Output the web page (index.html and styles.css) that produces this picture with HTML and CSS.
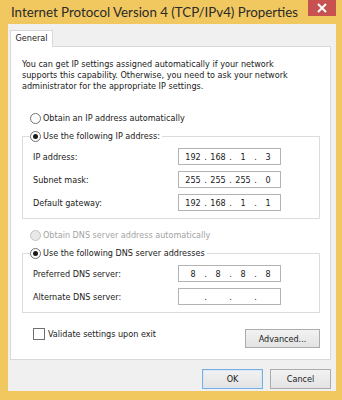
FILE: index.html
```html
<!DOCTYPE html>
<html lang="en">
<head>
  <meta charset="UTF-8">
  <title>Internet Protocol Version 4 (TCP/IPv4) Properties</title>
  <link rel="stylesheet" href="styles.css">
</head>
<body>
  <div class="window">
    <!-- Заголовок окна -->
    <div class="titlebar">
      <span class="title">Internet Protocol Version 4 (TCP/IPv4) Properties</span>
      <span class="close">
        <svg width="28" height="16" viewBox="0 0 28 16"><path d="M10 4 L18 12 M18 4 L10 12" stroke="#fff" stroke-width="2" fill="none"/></svg>
      </span>
    </div>

    <div class="client">
      <div class="tabs"><div class="tab">General</div></div>

      <div class="panel">
        <p class="intro">You can get IP settings assigned automatically if your network<br>supports this capability. Otherwise, you need to ask your network<br>administrator for the appropriate IP settings.</p>

        <div class="option first"><span class="radio"></span>Obtain an IP address automatically</div>

        <fieldset class="group">
          <legend class="option"><span class="radio checked"></span>Use the following IP address:</legend>
          <div class="field">
            <span class="label">IP address:</span>
            <span class="ip"><span class="oct">192</span><span class="dot">.</span><span class="oct">168</span><span class="dot">.</span><span class="oct">1</span><span class="dot">.</span><span class="oct">3</span></span>
          </div>
          <div class="field">
            <span class="label">Subnet mask:</span>
            <span class="ip"><span class="oct">255</span><span class="dot">.</span><span class="oct">255</span><span class="dot">.</span><span class="oct">255</span><span class="dot">.</span><span class="oct">0</span></span>
          </div>
          <div class="field">
            <span class="label">Default gateway:</span>
            <span class="ip"><span class="oct">192</span><span class="dot">.</span><span class="oct">168</span><span class="dot">.</span><span class="oct">1</span><span class="dot">.</span><span class="oct">1</span></span>
          </div>
        </fieldset>

        <div class="option disabled after-group"><span class="radio"></span>Obtain DNS server address automatically</div>

        <fieldset class="group">
          <legend class="option"><span class="radio checked"></span>Use the following DNS server addresses</legend>
          <div class="field">
            <span class="label">Preferred DNS server:</span>
            <span class="ip"><span class="oct">8</span><span class="dot">.</span><span class="oct">8</span><span class="dot">.</span><span class="oct">8</span><span class="dot">.</span><span class="oct">8</span></span>
          </div>
          <div class="field">
            <span class="label">Alternate DNS server:</span>
            <span class="ip"><span class="oct"></span><span class="dot">.</span><span class="oct"></span><span class="dot">.</span><span class="oct"></span><span class="dot">.</span><span class="oct"></span></span>
          </div>
        </fieldset>

        <div class="bottom-row">
          <label class="check"><span class="box"></span>Validate settings upon exit</label>
          <button class="btn advanced">Advanced...</button>
        </div>
      </div>

      <!-- Кнопки диалога -->
      <div class="actions">
        <button class="btn default">OK</button>
        <button class="btn">Cancel</button>
      </div>
    </div>
  </div>
</body>
</html>
```

FILE: styles.css
```css
* {
  box-sizing: border-box;
}

body {
  margin: 0;
  background: #f1c760;
  font-family: "DejaVu Sans Condensed", "DejaVu Sans", sans-serif;
  font-size: 9px;
  color: #1a1a1a;
}

/* Рамка окна */
.window {
  width: 342px;
  height: 400px;
  background: #f1c760;
  padding: 0 6px 9px 8px;
  display: flex;
  flex-direction: column;
}

.titlebar {
  height: 24px;
  display: flex;
  justify-content: space-between;
  align-items: flex-start;
}

.title {
  font-family: Lato, "Noto Sans", sans-serif;
  font-size: 13.3px;
  line-height: 20px;
  white-space: nowrap;
  color: #2b2b2b;
  padding: 2px 0 0 3px;
  min-width: 0;
}

.close {
  width: 28px;
  height: 16px;
  background: #c75050;
  display: flex;
  flex-shrink: 0;
}

/* Клиентская область */
.client {
  flex: 1;
  background: #f0f0f0;
  padding: 6px 5px 0 2px;
}

.tabs {
  display: flex;
  height: 16px;
}

.tab {
  position: relative;
  width: 43px;
  height: 17px;
  background: #fff;
  border: 1px solid #d9d9d9;
  border-bottom: none;
  text-align: center;
  line-height: 15px;
}

.panel {
  height: 314px;
  background: #fff;
  border: 1px solid #d9d9d9;
  padding: 12px 10px 0 11px;
}

.intro {
  margin: 0;
  line-height: 11px;
}

/* Радиокнопки */
.option {
  display: flex;
  align-items: center;
  height: 14px;
  line-height: 14px;
  padding-left: 8px;
}

.option.first {
  margin-top: 19px;
}

.option.after-group {
  margin-top: 9px;
}

.option.disabled {
  color: #a3a3a3;
}

.radio {
  width: 11px;
  height: 11px;
  border: 1px solid #707070;
  border-radius: 50%;
  background: #fff;
  margin-right: 2px;
  display: flex;
  align-items: center;
  justify-content: center;
}

.radio.checked::after {
  content: "";
  width: 5px;
  height: 5px;
  border-radius: 50%;
  background: #1a1a1a;
}

.disabled .radio {
  border-color: #c4c4c4;
  background: #e8e8e8;
}

/* Группы полей */
.group {
  margin: 4px 0 0;
  padding: 5px 0 7px 10px;
  border: 1px solid #dcdcdc;
  min-width: 0;
}

.group legend {
  padding: 0 2px 0 0;
  margin-left: -3px;
}

.field {
  display: flex;
  align-items: center;
  height: 17px;
  margin-bottom: 6px;
}

.field:last-child {
  margin-bottom: 0;
}

.label {
  width: 145px;
}

.ip {
  display: flex;
  align-items: center;
  width: 103px;
  height: 17px;
  border: 1px solid #b3b3b3;
  background: #fff;
  padding-left: 5px;
}

.oct {
  width: 18px;
  text-align: center;
}

.dot {
  width: 7px;
  text-align: center;
}

/* Нижняя строка панели */
.bottom-row {
  display: flex;
  justify-content: space-between;
  align-items: flex-start;
  margin-top: 15px;
}

.check {
  display: flex;
  align-items: center;
  height: 12px;
  padding-left: 11px;
}

.box {
  width: 12px;
  height: 12px;
  border: 1px solid #707070;
  background: #fff;
  margin-right: 3px;
}

.btn {
  font-family: inherit;
  font-size: 9px;
  color: #1a1a1a;
  height: 20px;
  padding: 0;
  background: linear-gradient(#f2f2f2, #e3e3e3);
  border: 1px solid #acacac;
}

.advanced {
  width: 75px;
  height: 19px;
  margin-top: 1px;
}

.actions {
  display: flex;
  justify-content: flex-end;
  gap: 7px;
  margin-top: 9px;
}

.actions .btn {
  width: 61px;
}

.btn.default {
  border-color: #7aaee0;
  box-shadow: inset 0 0 0 1px #d6e8f8;
}
```
